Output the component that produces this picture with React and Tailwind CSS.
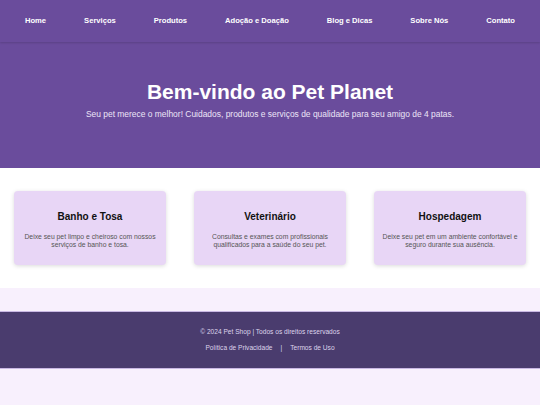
import React from 'react';

const links = ['Home', 'Serviços', 'Produtos', 'Adoção e Doação', 'Blog e Dicas', 'Sobre Nós', 'Contato'];

const services = [
  { title: 'Banho e Tosa', desc: 'Deixe seu pet limpo e cheiroso com nossos serviços de banho e tosa.' },
  { title: 'Veterinário', desc: 'Consultas e exames com profissionais qualificados para a saúde do seu pet.' },
  { title: 'Hospedagem', desc: 'Deixe seu pet em um ambiente confortável e seguro durante sua ausência.' },
];

const App = () => {
  return (
    <div className="min-h-[405px] bg-[#f8f0fd] font-['Liberation_Sans',Arial,sans-serif]">
      {/* Nav */}
      <nav className="h-[42px] bg-[#6a4c9c] flex items-center justify-between px-[25px] shadow-[0_1px_2px_rgba(0,0,0,0.15)] relative">
        {links.map((l) => (
          <a key={l} className="text-[7.6px] font-bold text-white">{l}</a>
        ))}
      </nav>

      {/* Hero */}
      <header className="h-[126px] bg-[#6a4c9c] pt-[38px] text-center">
        <h1 className="text-[21px] leading-[24px] font-bold text-white">Bem-vindo ao Pet Planet</h1>
        <p className="mt-[5px] text-[8.45px] leading-[10px] text-[#ece4f7]">
          Seu pet merece o melhor! Cuidados, produtos e serviços de qualidade para seu amigo de 4 patas.
        </p>
      </header>

      {/* Services */}
      <section className="bg-white py-[23px] px-[14px] grid grid-cols-3 gap-[28px]">
        {services.map((s) => (
          <div key={s.title} className="h-[74px] bg-[#e8d6f6] rounded-[4px] shadow-[0_1px_4px_rgba(0,0,0,0.15)] pt-[20px] px-[8px] text-center">
            <h3 className="text-[10px] leading-[12px] font-bold text-[#111]">{s.title}</h3>
            <p className="mt-[10px] text-[6.8px] leading-[8px] text-[#555]">{s.desc}</p>
          </div>
        ))}
      </section>

      <div className="h-[23px]" />

      {/* Footer */}
      <footer className="h-[58px] bg-[#4a3c6e] border-y border-[#c9b8e3] flex flex-col items-center pt-[16px] text-[6.6px] leading-[8px] text-[#ddd4ec]">
        <p>© 2024 Pet Shop | Todos os direitos reservados</p>
        <p className="mt-[8px] flex gap-[8px]">
          <a>Política de Privacidade</a>
          <span>|</span>
          <a>Termos de Uso</a>
        </p>
      </footer>
    </div>
  );
};

export default App;
